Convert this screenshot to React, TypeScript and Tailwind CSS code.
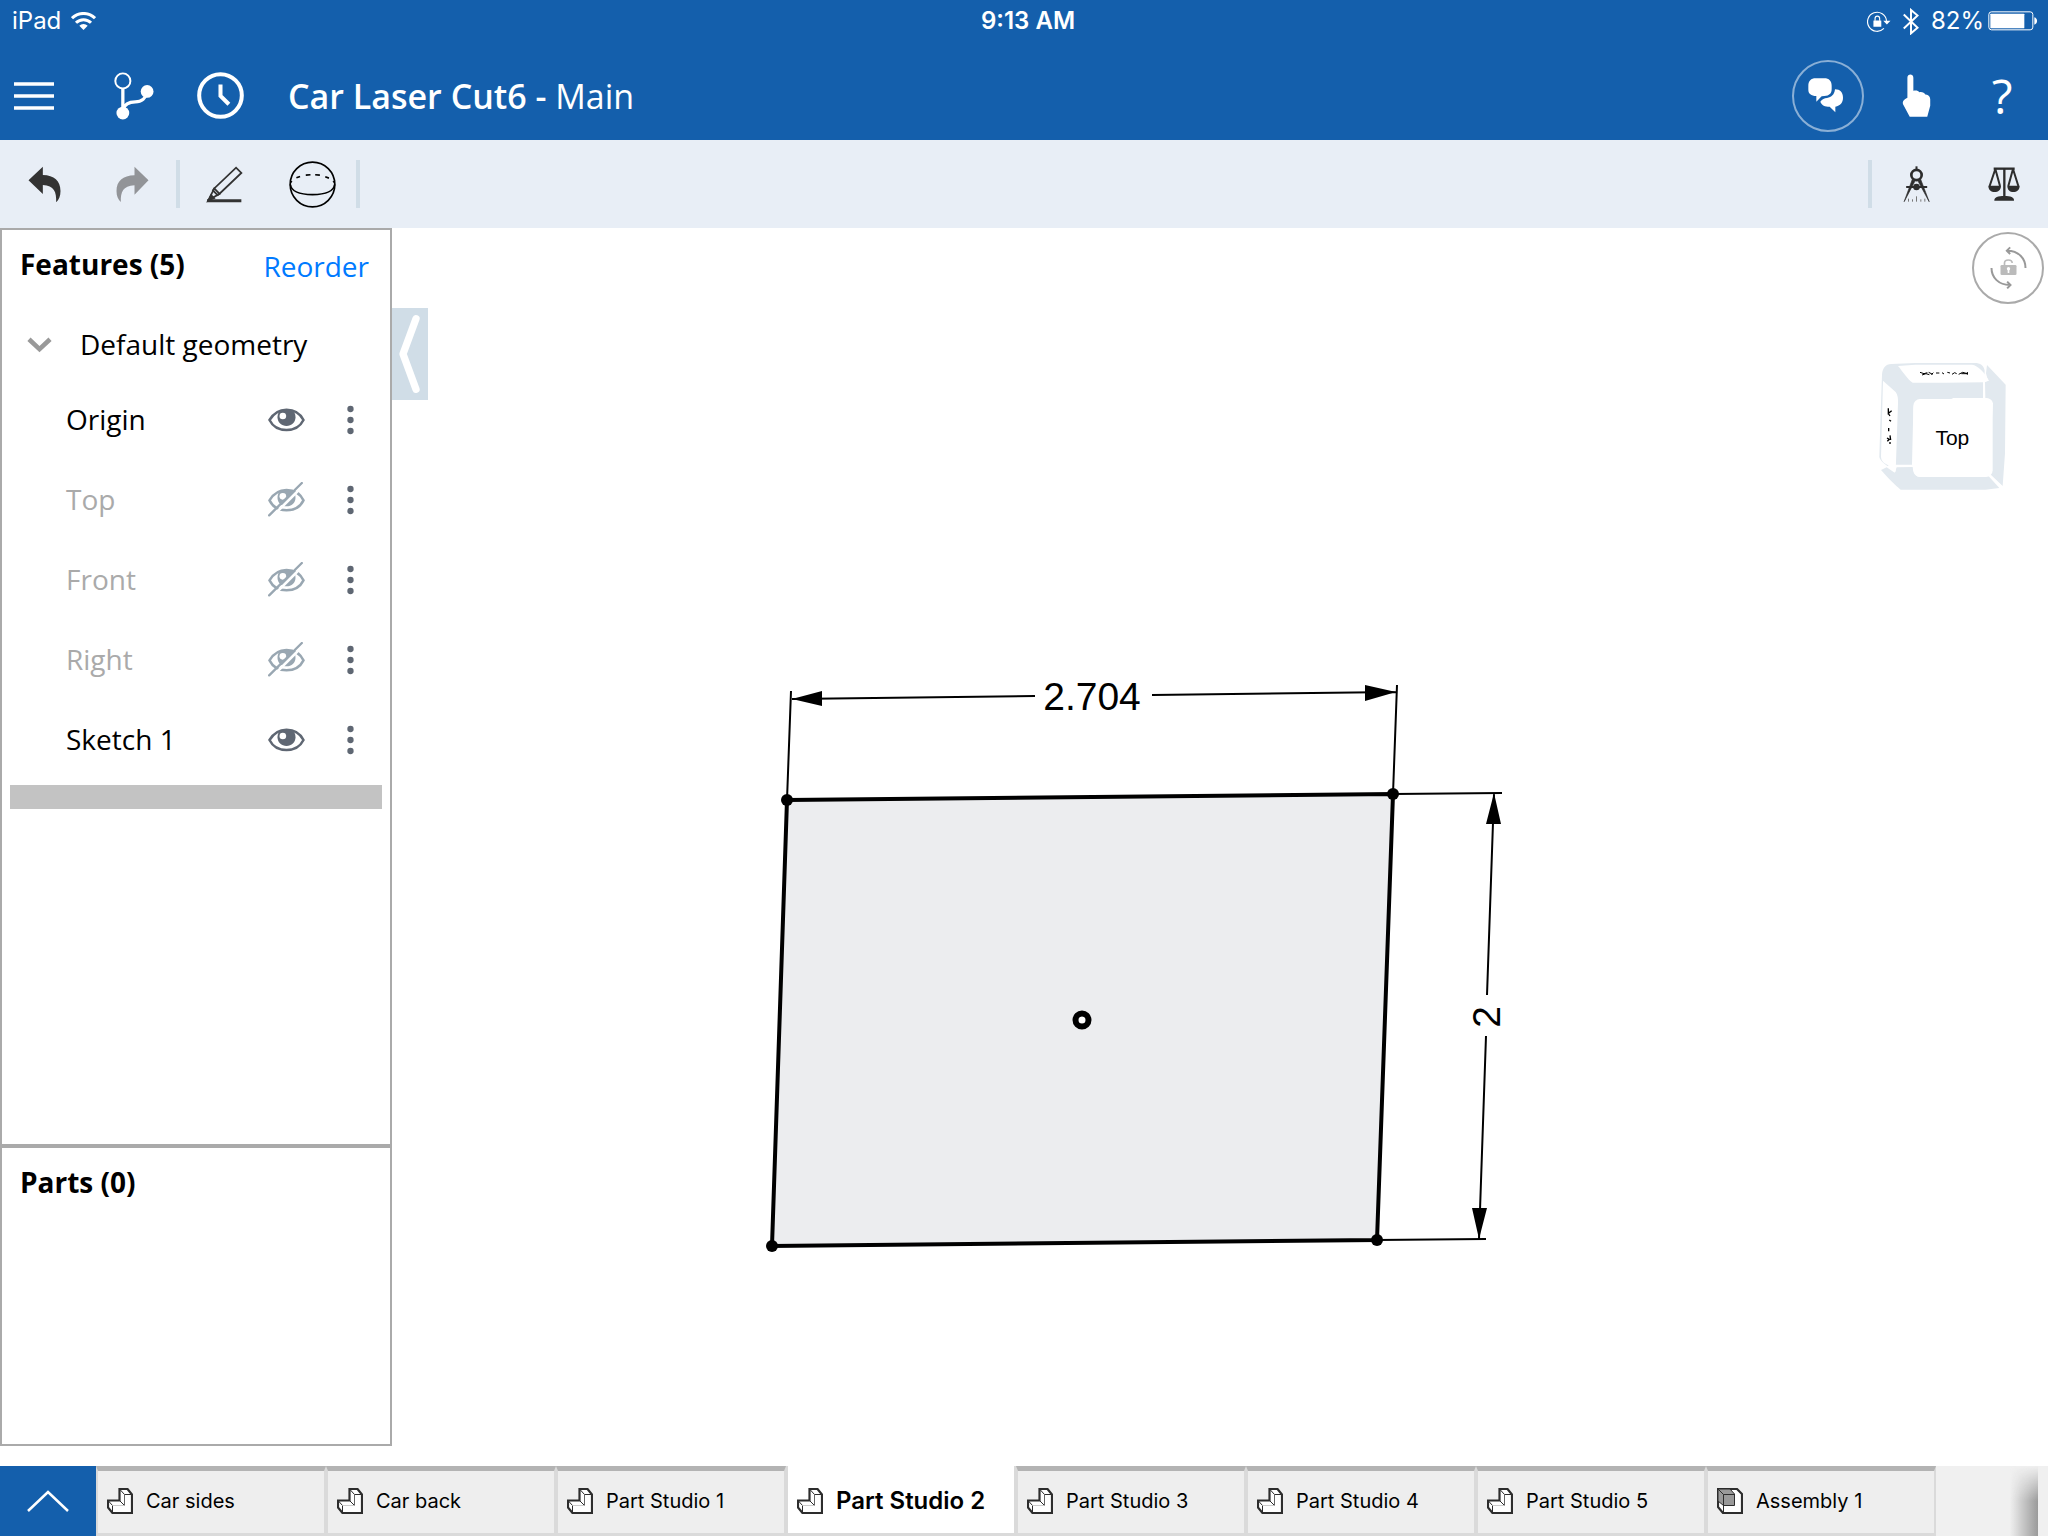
import clsx from 'clsx';
import type { ReactNode } from 'react';

interface Feature {
  name: string;
  visible: boolean;
}

interface DocumentTab {
  name: string;
  kind: 'part' | 'assembly';
}

const features: Feature[] = [
  { name: 'Origin', visible: true },
  { name: 'Top', visible: false },
  { name: 'Front', visible: false },
  { name: 'Right', visible: false },
  { name: 'Sketch 1', visible: true },
];

const tabs: DocumentTab[] = [
  { name: 'Car sides', kind: 'part' },
  { name: 'Car back', kind: 'part' },
  { name: 'Part Studio 1', kind: 'part' },
  { name: 'Part Studio 2', kind: 'part' },
  { name: 'Part Studio 3', kind: 'part' },
  { name: 'Part Studio 4', kind: 'part' },
  { name: 'Part Studio 5', kind: 'part' },
  { name: 'Assembly 1', kind: 'assembly' },
];

const activeTab = 'Part Studio 2';

/* ---------- icons ---------- */

function WifiIcon() {
  return (
    <svg viewBox="0 0 25 18" className="h-[18px] w-[25px]" fill="none" stroke="currentColor" strokeWidth="3">
      <path d="M1 6.2A16.3 16.3 0 0 1 24 6.2" />
      <path d="M5 10.8A10.6 10.6 0 0 1 20 10.8" />
      <path d="M12.5 18L8.3 13.8A6 6 0 0 1 16.7 13.8Z" fill="currentColor" stroke="none" />
    </svg>
  );
}

function OrientationLockIcon() {
  return (
    <svg viewBox="386 28 72 64" className="h-[21px] w-6" fill="none" stroke="currentColor" strokeWidth="3.5">
      <path d="M445 58A29 29 0 1 0 437 81" />
      <path d="M435 58H457L446 69Z" fill="currentColor" stroke="none" />
      <rect x="405" y="57" width="24" height="19" rx="1" fill="currentColor" stroke="none" />
      <path d="M410 58V51C410 41 424 41 424 51V58" />
    </svg>
  );
}

function BluetoothIcon() {
  return (
    <svg viewBox="492 20 48 82" className="h-[27px] w-4" fill="none" stroke="currentColor" strokeWidth="6">
      <path d="M494 40L536 80L516 97V26L536 43L494 82" />
    </svg>
  );
}

function BatteryIcon() {
  return (
    <svg viewBox="743 32 150 60" className="h-5 w-[50px]">
      <rect x="745.5" y="34.5" width="132" height="54" rx="8" fill="none" stroke="currentColor" strokeWidth="3" />
      <rect x="750" y="40" width="102" height="44" rx="2" fill="currentColor" />
      <path d="M882 51C893 54 893 70 882 73Z" fill="currentColor" />
    </svg>
  );
}

function MenuIcon() {
  return (
    <svg viewBox="0 0 40 28" className="h-7 w-10" stroke="currentColor" strokeWidth="3.5">
      <path d="M0 2H40M0 14H40M0 26H40" />
    </svg>
  );
}

function BranchIcon() {
  return (
    <svg viewBox="341 36 122 144" className="h-12 w-10" fill="none" stroke="currentColor">
      <circle cx="368" cy="62" r="23" strokeWidth="6" />
      <path d="M368 86V150C374 130 388 126 406 126C426 126 438 114 441 98" strokeWidth="10" />
      <circle cx="442" cy="94" r="19.5" fill="currentColor" stroke="none" />
      <circle cx="368" cy="160" r="19.5" fill="currentColor" stroke="none" />
    </svg>
  );
}

function ClockIcon() {
  return (
    <svg viewBox="593 35 140 140" className="size-[47px]" fill="none" stroke="currentColor" strokeWidth="12">
      <circle cx="663" cy="105" r="63.5" />
      <path d="M663 72V106L688 131" />
    </svg>
  );
}

function ChatIcon() {
  return (
    <svg viewBox="200 230 126 114" className="h-[38px] w-[42px]" fill="currentColor">
      <path d="M226 234H252C266 234 274 242 274 256V266C274 280 267 286 252 287L244 288L228 304V287C212 286 204 280 204 268V256C204 242 212 234 226 234Z" />
      <path d="M284 267C300 267 308 277 308 292C308 306 300 316 285 319V336L268 319C254 319 244 315 240 304C246 296 252 294 260 293C274 291 282 283 284 267Z" />
    </svg>
  );
}

function HandIcon() {
  return (
    <svg viewBox="485 218 87 130" className="h-[43px] w-[29px]" fill="currentColor">
      <path d="M501 229C501 216 519 216 519 229V269C526 266 534 268 537 273C545 271 553 275 555 280C564 279 570 286 570 294V314L561 347H508L489 312C485 304 486 297 501 290Z" />
    </svg>
  );
}

function UndoIcon() {
  return (
    <svg viewBox="84 320 98 114" className="h-[38px] w-[33px]" fill="currentColor">
      <path d="M85 366L128 325V350C162 351 181 367 181 398C181 414 176 424 168 432C169 400 162 382 128 380V407Z" />
    </svg>
  );
}

function RedoIcon() {
  return (
    <svg viewBox="350 316 98 114" className="h-[38px] w-[33px]" fill="currentColor">
      <path d="M447 362L405 321V347C370 348 351 364 351 394C351 410 356 420 364 427C363 397 370 379 405 377V405Z" />
    </svg>
  );
}

function SketchIcon() {
  return (
    <svg viewBox="616 312 110 112" className="size-[37px]" fill="none" stroke="currentColor" strokeWidth="5.5">
      <path d="M622 416L640 380L706 317L722 333L656 396Z" />
      <path d="M640 380L656 396L650 400L636 386Z" />
      <path d="M618 420L630 396L644 410Z" fill="currentColor" stroke="none" />
      <path d="M618 417H722" strokeWidth="9" />
    </svg>
  );
}

function SphereIcon() {
  return (
    <svg viewBox="866 302 140 140" className="size-[47px]" fill="none" stroke="black" strokeWidth="5">
      <circle cx="936" cy="372" r="66.5" />
      <path d="M870 372C873 394 900 402 936 402S999 394 1002 372" />
      <path d="M888 352L899 348M916 344L930 343M944 343L958 344M974 349L985 353M872 366L874 362M1000 366L998 362" />
    </svg>
  );
}

function CompassIcon() {
  return (
    <svg viewBox="487 499 80 108" className="h-9 w-[27px]" fill="none" stroke="#2d2d2d">
      <circle cx="527" cy="526" r="15.5" strokeWidth="8" />
      <path d="M527 500V512" strokeWidth="6" />
      <path d="M496 562H559" strokeWidth="6" />
      <circle cx="527" cy="562" r="10" fill="#2d2d2d" stroke="none" />
      <path d="M514 540L522 545L490 606ZM540 540L532 545L565 606Z" fill="#2d2d2d" strokeWidth="2" />
      <path d="M503 597V606M515 599V606M527 590V606M540 599V606M552 597V606" stroke="#777" strokeWidth="3" />
    </svg>
  );
}

function ScalesIcon() {
  return (
    <svg viewBox="740 499 96 102" className="h-[34px] w-8" fill="none" stroke="#2d2d2d">
      <path d="M757 504H820" strokeWidth="7" />
      <path d="M789 504V590" strokeWidth="7" />
      <path d="M762 505L745 556M762 505L776 556M815 505L801 556M815 505L831 556" strokeWidth="6" />
      <path d="M741 555H779C779 568 770 574 760 574S741 568 741 555ZM798 555H835C835 568 826 574 816 574S798 568 798 555Z" fill="#2d2d2d" stroke="none" />
      <path d="M759 600C758 590 770 586 789 586S819 590 818 600Z" fill="#2d2d2d" stroke="none" />
    </svg>
  );
}

function RotateLockIcon() {
  return (
    <svg viewBox="746 738 116 132" className="h-11 w-[39px]" fill="none" stroke="#999" strokeWidth="6">
      <path d="M800 752C834 752 855 775 855 804M809 742L799 752L809 762" />
      <path d="M753 804C753 833 775 855 808 855M800 845L810 855L800 865" />
      <rect x="780" y="795" width="48" height="30" rx="4" fill="#bbb" stroke="none" />
      <path d="M792 796V789C792 777 815 777 815 789" stroke="#bbb" strokeWidth="5" />
      <circle cx="804" cy="806" r="5" fill="white" stroke="none" />
      <path d="M804 806V819" stroke="white" strokeWidth="5" />
    </svg>
  );
}

function EyeShape() {
  return (
    <>
      <path d="M807 585C820 563 838 554 858 554S898 563 909 585C898 607 878 615 858 615S818 607 807 585Z" fill="none" stroke="currentColor" strokeWidth="7.5" />
      <path d="M831 577C831 562 838 554 858 554S885 562 885 577C885 592 873 603 858 603S831 592 831 577Z" fill="currentColor" />
      <circle cx="847" cy="573" r="10" fill="white" />
    </>
  );
}

function EyeIcon() {
  return (
    <svg viewBox="803 531 110 108" className="h-9 w-[37px] text-[#5f6773]">
      <EyeShape />
    </svg>
  );
}

function EyeOffIcon() {
  return (
    <svg viewBox="803 530 110 108" className="h-9 w-[37px] text-[#99a7b2]">
      <EyeShape />
      <path d="M812 637L912 537" stroke="white" strokeWidth="8" />
      <path d="M806 630L904 533" stroke="currentColor" strokeWidth="7" strokeLinecap="round" />
    </svg>
  );
}

function MoreIcon() {
  return (
    <svg viewBox="1040 540 20 90" className="h-[30px] w-[7px] fill-[#5f6773]">
      <circle cx="1050" cy="552" r="9.5" />
      <circle cx="1050" cy="585" r="9.5" />
      <circle cx="1050" cy="618" r="9.5" />
    </svg>
  );
}

function PartIcon() {
  return (
    <svg viewBox="0 0 26 26" className="size-[26px] shrink-0" stroke="#2d2d2d">
      <path d="M12.5 1H20.5L25 6.5V25H5.5L1 19.5V12.5H12.5Z" fill="white" strokeWidth="2.2" />
      <path d="M12.5 1L17.5 6.5H25M17.5 17.5L12.5 12.5M1 12.5L5.5 17.5V25" fill="none" />
      <path d="M17.5 6.5V17.5" stroke="#666" />
      <path d="M5.5 17.5H17.5" stroke="#ccc" />
    </svg>
  );
}

function AssemblyIcon() {
  return (
    <svg viewBox="0 0 26 26" className="size-[26px] shrink-0" stroke="#2d2d2d">
      <path d="M1 1H20L25 6V25H6L1 19Z" fill="white" strokeWidth="2.2" />
      <path d="M1 1H13L17.5 6V17.5H6.5L1 13Z" fill="#999" />
      <path d="M1 1L6.5 6.5H17.5M6.5 6.5V25" fill="none" />
    </svg>
  );
}

/* ---------- building blocks ---------- */

function ToolButton({ label, disabled, children }: { label: string; disabled?: boolean; children: ReactNode }) {
  return (
    <button
      type="button"
      aria-label={label}
      disabled={disabled}
      className="flex h-full w-[88px] items-center justify-center text-[#333] disabled:text-[#929498]"
    >
      {children}
    </button>
  );
}

function ToolDivider() {
  return <div className="h-12 w-1 bg-[#d0dde7]" />;
}

function StatusBar() {
  return (
    <div className="grid h-10 grid-cols-3 items-center pt-0.5 pr-2.5 pl-3 font-['Inter',sans-serif] text-2xl leading-8">
      <div className="flex items-center gap-2.5">
        <span>iPad</span>
        <WifiIcon />
      </div>
      <span className="pl-1.5 text-center font-semibold">9:13 AM</span>
      <div className="flex items-center justify-end">
        <OrientationLockIcon />
        <span className="mx-3">
          <BluetoothIcon />
        </span>
        <span className="mr-1">82%</span>
        <BatteryIcon />
      </div>
    </div>
  );
}

function Header() {
  return (
    <header className="bg-[#145fac] text-white">
      <StatusBar />
      <div className="flex h-[100px] items-center pt-[11px] pl-3.5">
        <button type="button" aria-label="Menu" className="mr-[60px]">
          <MenuIcon />
        </button>
        <button type="button" aria-label="Versions" className="mr-[43px]">
          <BranchIcon />
        </button>
        <button type="button" aria-label="History" className="mr-11">
          <ClockIcon />
        </button>
        <h1 className="flex-1 text-[34px] leading-10 font-semibold">
          Car Laser Cut6 - <span className="font-normal">Main</span>
        </h1>
        <button
          type="button"
          aria-label="Comments"
          className="mr-2 flex size-[72px] items-center justify-center rounded-full border-2 border-white/50"
        >
          <ChatIcon />
        </button>
        <button type="button" aria-label="Touch mode" className="flex w-[88px] justify-center">
          <HandIcon />
        </button>
        <button type="button" aria-label="Help" className="mr-1 w-[84px] text-center text-5xl leading-12">
          ?
        </button>
      </div>
    </header>
  );
}

function Toolbar() {
  return (
    <div className="flex h-[88px] items-center bg-[#e8eef6]">
      <ToolButton label="Undo">
        <UndoIcon />
      </ToolButton>
      <ToolButton label="Redo" disabled>
        <RedoIcon />
      </ToolButton>
      <ToolDivider />
      <ToolButton label="Sketch">
        <SketchIcon />
      </ToolButton>
      <ToolButton label="Features">
        <SphereIcon />
      </ToolButton>
      <ToolDivider />
      <div className="ml-auto flex h-full items-center">
        <ToolDivider />
        <ToolButton label="Measure">
          <CompassIcon />
        </ToolButton>
        <ToolButton label="Mass properties">
          <ScalesIcon />
        </ToolButton>
      </div>
    </div>
  );
}

function FeatureRow({ feature }: { feature: Feature }) {
  return (
    <li className="flex h-20 items-center pr-8 pl-16">
      <span className={clsx('flex-1 pb-0.5', !feature.visible && 'text-[#aaa]')}>{feature.name}</span>
      <button type="button" aria-label={`Toggle ${feature.name}`} className="mr-[42px]">
        {feature.visible ? <EyeIcon /> : <EyeOffIcon />}
      </button>
      <button type="button" aria-label={`${feature.name} options`} className="mr-1">
        <MoreIcon />
      </button>
    </li>
  );
}

function Sidebar() {
  return (
    <aside className="mb-5 flex w-[392px] shrink-0 flex-col border-2 border-[#aaa] text-[28px] leading-10">
      <section className="flex-1">
        <div className="flex h-20 items-start justify-between pt-4 pr-[21px] pl-[18px]">
          <h2 className="leading-9 font-bold">Features (5)</h2>
          <button type="button" className="text-[#007aff]">
            Reorder
          </button>
        </div>
        <button type="button" className="flex h-[70px] w-full items-center gap-7 pb-0.5 pl-[25px] text-left">
          <svg viewBox="82 332 76 50" className="h-[17px] w-[25px]" fill="none" stroke="#999" strokeWidth="14">
            <path d="M88 341L120 371L152 341" />
          </svg>
          Default geometry
        </button>
        <ul>
          {features.map((feature) => (
            <FeatureRow key={feature.name} feature={feature} />
          ))}
        </ul>
        <div className="mx-2 mt-[5px] h-6 bg-[#c3c3c3]" />
      </section>
      <section className="h-[300px] border-t-4 border-[#aaa] px-[18px] pt-4">
        <h2 className="leading-9 font-bold">Parts (0)</h2>
      </section>
    </aside>
  );
}

function ViewCube() {
  return (
    <svg viewBox="0 0 594 510" className="absolute top-28 right-0 h-[170px] w-[198px]" role="img" aria-label="View cube">
      <path d="M96 104C98 84 106 73 124 72L196 69H380C396 72 402 80 404 92L400 174H310L304 177H214C198 180 192 190 190 206L186 374H138L112 378C96 366 88 356 88 350L91 250Z" fill="#e2e9ef" />
      <path d="M411 75L467 134L465 340L458 438L416 398L429 190C426 178 418 174 406 174L405 126L414 122L408 100Z" fill="#e2e9ef" />
      <path d="M93 390L110 382L134 398L140 382L188 381C190 400 196 410 212 411H404L412 404L448 444L406 449H152C136 436 110 410 93 390Z" fill="#e2e9ef" />
      {/* back and left faces */}
      <path d="M144 78L196 74H366C384 76 404 98 417 122L400 127L288 128H188C172 118 158 94 144 78Z" fill="white" />
      <path d="M99 122L137 156C143 164 145 176 144 190L137 396L112 374C100 368 94 362 93 350Z" fill="white" />
      <path d="M402 126V174M138 378H187M414 402L456 442" stroke="white" strokeWidth="6" />
      {/* labels seen edge-on */}
      <path
        d="M210 97L222 101L232 98M216 105L228 101L238 104M236 97L248 103M250 98L244 104M258 99H268M276 98L282 102M292 97L300 99M306 103L314 98L320 101M326 103L338 97L352 101M334 101H354M352 96V104"
        fill="none"
        stroke="black"
        strokeWidth="3"
      />
      <path
        d="M115 205V220L125 212M116 222L120 228M118 240L123 244M116 264V274M120 286L122 300M111 294L118 298L112 304M120 306V312"
        fill="none"
        stroke="black"
        strokeWidth="4"
      />
      <rect x="190" y="177" width="238" height="234" rx="20" fill="white" />
      <text x="307" y="316" textAnchor="middle" fontSize="63" className="font-['Liberation_Sans',sans-serif]">
        Top
      </text>
    </svg>
  );
}

function SketchCanvas() {
  return (
    <main className="relative min-w-0 flex-1">
      <svg viewBox="428 228 1620 1238" className="h-full w-full" fill="none" stroke="black" strokeWidth="2">
        <path d="M787 800L1393 794L1377 1240L772 1246Z" fill="#ecedef" strokeWidth="4" />
        <g fill="black" stroke="none">
          <circle cx="787" cy="800" r="6" />
          <circle cx="1393" cy="794" r="6" />
          <circle cx="1377" cy="1240" r="6" />
          <circle cx="772" cy="1246" r="6" />
        </g>
        <circle cx="1082" cy="1020" r="6.5" fill="white" strokeWidth="6" />

        {/* width dimension */}
        <path d="M787 800L791 691M1393 794L1397 685M792 699L1035 696M1152 695L1396 692" />
        <path d="M792 699L822 691V706ZM1396 692L1365 685V701Z" fill="black" stroke="none" />
        <text
          x="1092"
          y="710"
          textAnchor="middle"
          fontSize="39"
          fill="black"
          stroke="none"
          className="font-['Liberation_Sans',sans-serif]"
        >
          2.704
        </text>

        {/* height dimension */}
        <path d="M1393 794L1502 793M1377 1240L1486 1239M1494 794L1487 995M1486 1036L1479 1239" />
        <path d="M1494 793L1501 824H1486ZM1479 1239L1472 1208H1487Z" fill="black" stroke="none" />
        <text
          x="0"
          y="0"
          transform="translate(1500 1017) rotate(-90)"
          textAnchor="middle"
          fontSize="39"
          fill="black"
          stroke="none"
          className="font-['Liberation_Sans',sans-serif]"
        >
          2
        </text>
      </svg>
      <button
        type="button"
        aria-label="Lock rotation"
        className="absolute top-1 right-1 flex size-[72px] items-center justify-center rounded-full border-2 border-[#aaa]"
      >
        <RotateLockIcon />
      </button>
      <ViewCube />
    </main>
  );
}

function TabBar() {
  return (
    <nav className="flex h-[70px] bg-[#f0f0f0] font-['Inter',sans-serif] text-xl leading-7">
      <button type="button" aria-label="Show tabs" className="flex w-24 shrink-0 items-center justify-center bg-[#145fac]">
        <svg viewBox="0 0 42 22" className="h-[22px] w-[42px]" fill="none" stroke="white" strokeWidth="2.5">
          <path d="M1 21L21 2L41 21" />
        </svg>
      </button>
      {tabs.map((tab) => {
        const active = tab.name === activeTab;
        return (
          <button
            key={tab.name}
            type="button"
            className={clsx(
              'flex w-[230px] shrink-0 items-center gap-[13px] border-x-2 border-b-[3px] border-x-[#dadada] border-b-[#dadada] pb-0.5 pl-[9px] whitespace-nowrap',
              active ? 'bg-white pt-[5px] text-2xl font-semibold' : 'border-t-[5px] border-t-[#b3b3b3] bg-[#eee]'
            )}
          >
            {tab.kind === 'part' ? <PartIcon /> : <AssemblyIcon />}
            {tab.name}
          </button>
        );
      })}
      {/* edge shadow hinting at more tabs */}
      <div className="mr-2.5 ml-auto w-7 bg-linear-to-r from-transparent to-[#999] mask-linear-180 mask-linear-from-transparent mask-linear-to-black mask-linear-to-50%" />
    </nav>
  );
}

export default function App() {
  return (
    <div className="flex h-screen flex-col overflow-hidden bg-white font-['Open_Sans',sans-serif] text-black">
      <Header />
      <Toolbar />
      <div className="flex min-h-0 flex-1">
        <Sidebar />
        <button type="button" aria-label="Collapse panel" className="mt-20 h-[92px] w-9 shrink-0 self-start bg-[#d0dde7]">
          <svg viewBox="1176 249 108 276" className="h-full w-full" fill="none" stroke="white" strokeWidth="22" strokeLinecap="round" strokeLinejoin="round">
            <path d="M1248 281L1209 387L1248 493" />
          </svg>
        </button>
        <SketchCanvas />
      </div>
      <TabBar />
    </div>
  );
}
